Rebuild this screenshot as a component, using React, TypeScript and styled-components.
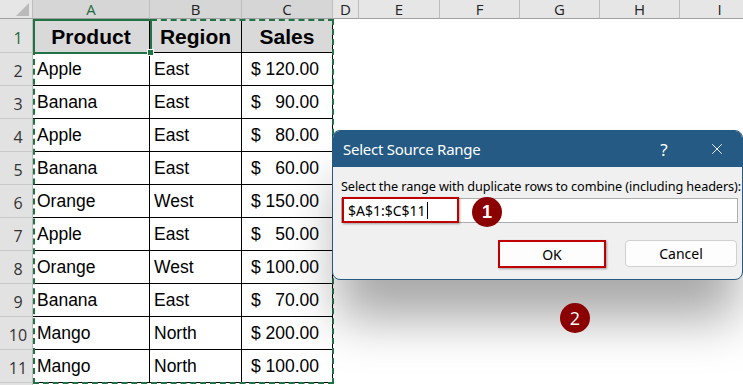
import styled, { createGlobalStyle } from 'styled-components';
import { X } from 'lucide-react';

const GlobalStyle = createGlobalStyle`
  html, body {
    margin: 0;
    padding: 0;
    background: #ffffff;
    overflow: hidden;
  }
`;

const Page = styled.div`
  position: relative;
  width: 743px;
  height: 385px;
  overflow: hidden;
  background: #ffffff;
`;

const Sheet = styled.div`
  display: grid;
  grid-template-columns: 33px 117px 92px 91px 26px 81px 80px 80px 80px 80px;
  grid-template-rows: 19px 34px repeat(10, 33px) 20px;
  position: relative;
`;

const Corner = styled.div`
  position: relative;
  background: #e6e6e6;
  border-right: 1px solid #bdbdbd;
  border-bottom: 1px solid #9f9f9f;
  box-sizing: border-box;

  &::after {
    content: '';
    position: absolute;
    right: 3px;
    bottom: 2px;
    width: 0;
    height: 0;
    border-left: 13px solid transparent;
    border-bottom: 13px solid #bababa;
  }
`;

const ColHead = styled.div<{ $sel?: boolean; $active?: boolean }>`
  display: flex;
  align-items: center;
  justify-content: center;
  box-sizing: border-box;
  background: ${(p) => (p.$sel ? '#d6d6d6' : '#e6e6e6')};
  border-right: 1px solid #bdbdbd;
  border-bottom: 1px solid #9f9f9f;
  font-family: 'Open Sans', 'Noto Sans', sans-serif;
  font-size: 15px;
  color: ${(p) => (p.$active ? '#1e6b41' : '#222222')};
  line-height: 1;
  padding-top: 1px;
`;

const RowHead = styled.div<{ $active?: boolean }>`
  display: flex;
  align-items: flex-end;
  justify-content: center;
  box-sizing: border-box;
  background: #e2e2e2;
  border-bottom: 1px solid #c9c9c9;
  border-right: 1px solid #bdbdbd;
  font-family: 'Open Sans', 'Noto Sans', sans-serif;
  font-size: 16px;
  color: ${(p) => (p.$active ? '#1e6b41' : '#333333')};
  padding-bottom: 3px;
  padding-left: 4px;
`;

const Cell = styled.div<{
  $head?: boolean;
  $table?: boolean;
}>`
  display: flex;
  align-items: ${(p) => (p.$head ? 'center' : 'flex-end')};
  justify-content: ${(p) => (p.$head ? 'center' : 'flex-start')};
  box-sizing: border-box;
  padding: ${(p) => (p.$head ? '2px 0 0' : '0 3px 5px 4px')};
  background: ${(p) => (p.$head ? '#d9d9d9' : '#ffffff')};
  border-right: ${(p) => (p.$table ? '1px solid #000' : 'none')};
  border-bottom: ${(p) => (p.$table ? '1px solid #000' : 'none')};
  font-family: 'Liberation Sans', Arial, sans-serif;
  font-size: ${(p) => (p.$head ? '21px' : '17.5px')};
  font-weight: ${(p) => (p.$head ? 700 : 400)};
  color: #000;
  white-space: nowrap;
`;

const Money = styled(Cell)`
  justify-content: space-between;
  padding: 0 13px 5px 9px;
`;

const Marquee = styled.div`
  position: absolute;
  left: 33px;
  top: 19px;
  width: 301px;
  height: 365px;
  box-sizing: border-box;
  border: 2px dashed #217346;
  pointer-events: none;
`;

const ActiveCell = styled.div`
  position: absolute;
  left: 33px;
  top: 19px;
  width: 119px;
  height: 35px;
  box-sizing: border-box;
  border: 2px solid #217346;

  &::after {
    content: '';
    position: absolute;
    right: -4px;
    bottom: -4px;
    width: 5px;
    height: 5px;
    background: #217346;
    border: 1px solid #fff;
  }
`;

const Dialog = styled.div`
  position: absolute;
  left: 332px;
  top: 130px;
  width: 411px;
  height: 150px;
  box-sizing: border-box;
  border: 1px solid #245a84;
  border-radius: 8px;
  background: #f0f0f0;
  overflow: hidden;
  display: flex;
  flex-direction: column;
  box-shadow: 0 45px 50px -6px rgba(0, 0, 0, 0.34);
`;

const TitleBar = styled.div`
  height: 36px;
  flex-shrink: 0;
  background: #245a84;
  display: flex;
  align-items: center;
  padding: 0 0 0 10px;
  color: #ffffff;
  font-family: 'Noto Sans', 'Open Sans', sans-serif;
  font-size: 15px;
`;

const Title = styled.div`
  flex: 1;
  letter-spacing: -0.25px;
`;

const TitleButton = styled.div<{ $w: number }>`
  width: ${(p) => p.$w}px;
  display: flex;
  align-items: center;
  justify-content: center;
  font-size: 17px;
`;

const Body = styled.div`
  flex: 1;
  display: flex;
  flex-direction: column;
  padding: 10px 2px 0 8px;
  font-family: 'Noto Sans', 'Open Sans', sans-serif;
`;

const Label = styled.div`
  font-size: 12.7px;
  color: #000;
  letter-spacing: -0.1px;
  white-space: nowrap;
  margin-bottom: 3px;
`;

const InputBox = styled.div`
  position: relative;
  height: 25px;
  margin-right: 2px;
  box-sizing: border-box;
  background: #ffffff;
  border: 1px solid #adadad;
  display: flex;
  align-items: center;
  padding-left: 6px;
  font-size: 14px;
  color: #000;
`;

const Caret = styled.span`
  display: inline-block;
  width: 1px;
  height: 17px;
  background: #000;
  margin-left: 1px;
`;

const Highlight = styled.div<{ $l: number; $t: number; $w: number; $h: number }>`
  position: absolute;
  left: ${(p) => p.$l}px;
  top: ${(p) => p.$t}px;
  width: ${(p) => p.$w}px;
  height: ${(p) => p.$h}px;
  box-sizing: border-box;
  border: 2px solid #c00000;
  box-shadow: 1px 1px 2px rgba(0, 0, 0, 0.35);
  pointer-events: none;
`;

const Buttons = styled.div`
  display: flex;
  justify-content: flex-end;
  gap: 19px;
  margin-top: 17px;
  padding-right: 3px;
`;

const Button = styled.div<{ $primary?: boolean }>`
  position: relative;
  width: ${(p) => (p.$primary ? '108px' : '112px')};
  height: ${(p) => (p.$primary ? '28px' : '27px')};
  box-sizing: border-box;
  display: flex;
  align-items: center;
  justify-content: center;
  background: #fdfdfd;
  border: ${(p) => (p.$primary ? '2px solid #c00000' : '1px solid #d0d0d0')};
  border-radius: ${(p) => (p.$primary ? '0' : '4px')};
  box-shadow: ${(p) => (p.$primary ? '1px 1px 2px rgba(0,0,0,0.35)' : 'none')};
  font-size: 14px;
  color: #000;
`;

const Badge = styled.div<{ $x: number; $y: number }>`
  position: absolute;
  left: ${(p) => p.$x - 15}px;
  top: ${(p) => p.$y - 15}px;
  width: 30px;
  height: 30px;
  border-radius: 50%;
  background: #8b0000;
  color: #ffffff;
  display: flex;
  align-items: center;
  justify-content: center;
  font-family: 'Liberation Sans', Arial, sans-serif;
  font-size: 18px;
  font-weight: 700;
`;

const Badge2 = styled(Badge)`
  font-weight: 400;
  font-family: 'Open Sans', 'Noto Sans', sans-serif;
`;

const columns = [
  { key: 'A', sel: true },
  { key: 'B', sel: true },
  { key: 'C', sel: true },
  { key: 'D' },
  { key: 'E' },
  { key: 'F' },
  { key: 'G' },
  { key: 'H' },
  { key: 'I' },
];

const data = [
  ['Apple', 'East', '120.00'],
  ['Banana', 'East', '90.00'],
  ['Apple', 'East', '80.00'],
  ['Banana', 'East', '60.00'],
  ['Orange', 'West', '150.00'],
  ['Apple', 'East', '50.00'],
  ['Orange', 'West', '100.00'],
  ['Banana', 'East', '70.00'],
  ['Mango', 'North', '200.00'],
  ['Mango', 'North', '100.00'],
];

const emptyCols = Array(6).fill(0);

const App = () => {
  return (
    <>
      <GlobalStyle />
      <Page>
        <Sheet>
          <Corner />
          {columns.map((c) => (
            <ColHead key={c.key} $sel={c.sel} $active={c.key === 'A'}>
              {c.key}
            </ColHead>
          ))}

          {/* header row */}
          <RowHead $active>1</RowHead>
          <Cell $head $table>Product</Cell>
          <Cell $head $table>Region</Cell>
          <Cell $head $table>Sales</Cell>
          {emptyCols.map((_, i) => (
            <Cell key={i} />
          ))}

          {data.map((row, r) => [
            <RowHead key={`h${r}`}>{r + 2}</RowHead>,
            <Cell key={`a${r}`} $table>{row[0]}</Cell>,
            <Cell key={`b${r}`} $table>{row[1]}</Cell>,
            <Money key={`c${r}`} $table>
              <span>$</span>
              <span>{row[2]}</span>
            </Money>,
            ...emptyCols.map((_, i) => <Cell key={`e${r}-${i}`} />),
          ])}

          <RowHead />
          {columns.map((c) => (
            <Cell key={`last${c.key}`} />
          ))}

          <ActiveCell />
          <Marquee />
        </Sheet>

        <Dialog>
          <TitleBar>
            <Title>Select Source Range</Title>
            <TitleButton $w={56}>?</TitleButton>
            <TitleButton $w={50}>
              <X size={18} strokeWidth={1.2} />
            </TitleButton>
          </TitleBar>
          <Body>
            <Label>
              Select the range with duplicate rows to combine (including headers):
            </Label>
            <InputBox>
              $A$1:$C$11
              <Caret />
            </InputBox>
            <Buttons>
              <Button $primary>OK</Button>
              <Button>Cancel</Button>
            </Buttons>
          </Body>
        </Dialog>

        <Highlight $l={342} $t={197} $w={117} $h={26} />
        <Badge $x={487} $y={212}>1</Badge>
        <Badge2 $x={575} $y={318}>2</Badge2>
      </Page>
    </>
  );
};

export default App;
